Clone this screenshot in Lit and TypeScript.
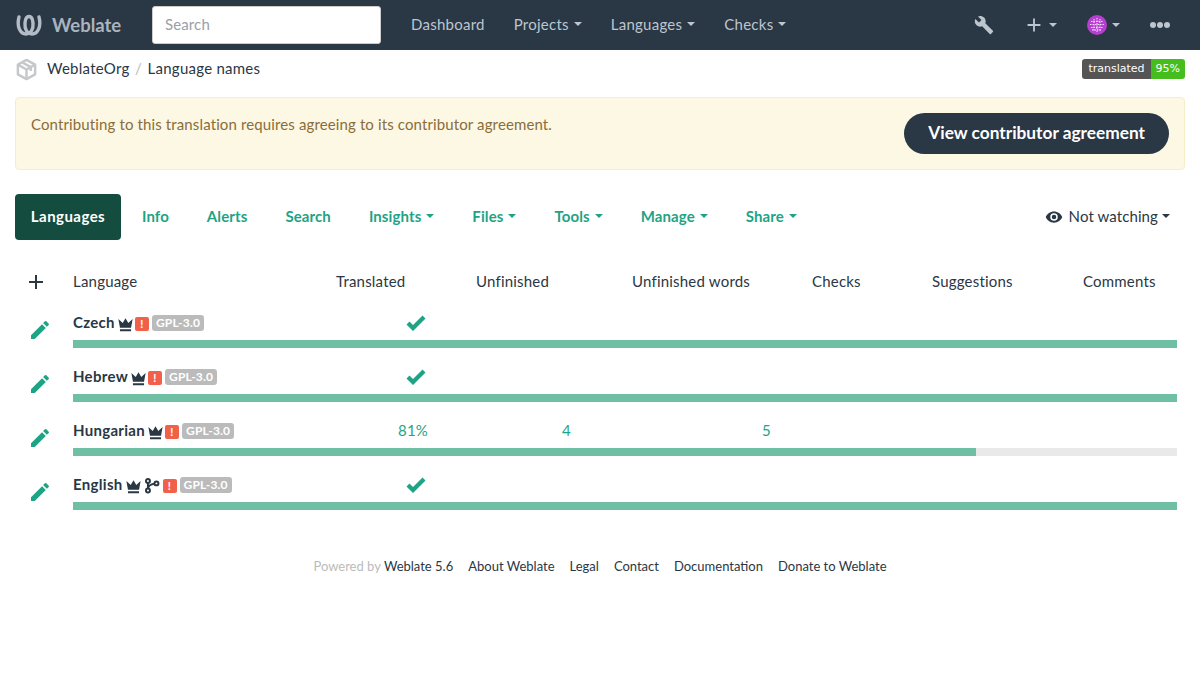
import { LitElement, html, css } from "lit";
import { customElement } from "lit/decorators.js";

const caret = html`<span class="caret"></span>`;
const crown = html`<svg class="ic crown" viewBox="0 0 24 24" width="19" height="19"><path fill="currentColor" d="M5 16 3 5l5.5 5L12 4l3.5 6L21 5l-2 11H5zM5 18h14v2.4H5z"/></svg>`;
const branch = html`<svg class="ic branch" viewBox="0 0 24 24" width="17" height="17"><g fill="none" stroke="currentColor" stroke-width="2.8"><circle cx="7" cy="5.5" r="2.8"/><circle cx="7" cy="19" r="2.8"/><circle cx="19" cy="9" r="2.8"/><path d="M7 8.3v8M16.2 9.5c-4 .6-8.6 1.5-9.2 6.5"/></g></svg>`;
const pencil = html`<svg class="pen" viewBox="0 0 24 24" width="24" height="24"><path fill="currentColor" d="M20.7 7.04a1 1 0 0 0 0-1.41l-2.34-2.34a1 1 0 0 0-1.41 0l-1.84 1.83 3.75 3.75M3 17.25V21h3.75L17.81 9.93l-3.75-3.75L3 17.25z"/></svg>`;
const check = html`<svg class="chk" viewBox="0 0 24 24" width="24" height="24"><path fill="currentColor" d="M21.5 7.5 9 20l-6.5-6.5 3-3L9 14l9.5-9.5 3 3z"/></svg>`;
const warn = html`<span class="warn">!</span>`;

type Row = { name: string; branch?: boolean; pct?: string; a?: string; b?: string; w: number };
const rows: Row[] = [
  { name: "Czech", w: 100 },
  { name: "Hebrew", w: 100 },
  { name: "Hungarian", pct: "81%", a: "4", b: "5", w: 81.8 },
  { name: "English", branch: true, w: 100 },
];

@customElement("app-root")
export class AppRoot extends LitElement {
  static styles = css`
    :host { display: block; min-height: 678px; background: #fff; color: #2a3744; font-family: "Lato", "Liberation Sans", sans-serif; font-size: 15px; line-height: 20px; letter-spacing: .125px; }
    * { box-sizing: border-box; }
    .nav { height: 50px; background: #2a3744; display: flex; align-items: center; color: #bdc6cf; }
    .brand { display: flex; align-items: center; gap: 9px; margin-left: 15px; width: 137px; font-size: 18.5px; font-weight: 700; color: #a9b4bf; letter-spacing: 0; padding-bottom: 1px; }
    .search { width: 229px; height: 38px; background: #fff; border: 1px solid #ccc; border-radius: 3px; padding: 0 12px 2px; display: flex; align-items: center; color: #9aa0a6; }
    .menu { display: flex; margin-left: 30px; gap: 29px; padding-bottom: 2px; letter-spacing: .25px; }
    .menu span { display: inline-flex; align-items: center; }
    .caret { display: inline-block; border-top: 4px solid currentColor; border-left: 4px solid transparent; border-right: 4px solid transparent; margin-left: 5px; }
    .tools { margin-left: auto; display: flex; align-items: center; margin-right: 30px; }
    .tools svg { display: block; }
    .plus { margin-left: 28.5px; display: flex; align-items: center; }
    .plus .caret { margin-left: 4.5px; }
    .avatar { margin-left: 30px; display: flex; align-items: center; }
    .dots { margin-left: 30px; display: flex; gap: 1px; }
    .dots i { width: 6px; height: 6px; border-radius: 50%; background: #bdc6cf; display: block; }
    .crumbs { height: 38px; display: flex; align-items: center; padding: 0 15px; letter-spacing: .25px; }
    .crumbs .org { margin-left: 9px; padding-bottom: 2px; }
    .crumbs .sep { color: #bbb; margin: 0 5.500px 2px 5.500px; }
    .crumbs .pg { padding-bottom: 2px; }
    .badge { margin-left: auto; display: flex; height: 20px; border-radius: 3px; overflow: hidden; font: 11px/20px "DejaVu Sans", sans-serif; letter-spacing: 0; color: #fff; }
    .badge b { font-weight: 400; background: #555; padding: 0 6px; }
    .badge u { text-decoration: none; background: #45bd1c; padding: 0 5px; }
    .alert { margin: 9px 15px 0; height: 73px; background: #fcf8e3; border: 1px solid #f5efc9; border-radius: 4px; padding: 16px 15px; display: flex; justify-content: space-between; color: #8a6d3b; }
    .cta { height: 41px; margin-top: -1px; padding: 0 24px 2px; background: #2a3744; color: #fff; font-size: 17.3px; letter-spacing: 0; font-weight: 700; border-radius: 21px; display: flex; align-items: center; }
    .tabs { margin: 24px 15px 0; display: flex; align-items: center; height: 46px; color: #1fa385; font-weight: 700; letter-spacing: .1px; }
    .tabs .t { display: inline-flex; align-items: center; margin-right: 38px; padding-bottom: 2px; }
    .tabs .active { background: #144d3f; color: #fff; border-radius: 4px; height: 46px; width: 106px; display: flex; align-items: center; justify-content: center; margin-right: 21px; padding-bottom: 2px; letter-spacing: .45px; }
    .watch { margin-left: auto; margin-right: 15px; font-weight: 400; letter-spacing: .1px; color: #2a3744; display: flex; align-items: center; padding-bottom: 2px; }
    .watch svg { margin: 2px 6px 0 0; }
    .watch .caret { margin-left: 4px; }
    .table { margin: 26px 15px 0; letter-spacing: .2px; }
    .row { display: grid; grid-template-columns: 58px 263px 140px 156px 180px 120px 151px 1fr; }
    .head { height: 32px; align-items: center; }
    .head span { white-space: nowrap; padding-bottom: 2px; }
    .plusico { margin-left: 9px; display: block; }
    .lang { height: 54px; grid-template-rows: 42px 8px; padding-right: 8px; }
    .edit { color: #1fa385; padding: 20px 0 0 13px; grid-row: 1 / 3; }
    .pen { display: block; }
    .name { font-weight: 700; display: flex; align-items: center; padding-top: 14px; height: 34px; letter-spacing: .3px; }
    .ic { display: block; flex: none; }
    .crown { margin: 4px 0 0 1px; }
    .branch { margin: 3px 3px 0 0; }
    .warn { width: 14px; height: 14px; margin-top: 4px; border-radius: 2px; background: #f1614a; color: #fff; font-size: 11px; font-weight: 700; display: flex; align-items: center; justify-content: center; }
    .lic { margin: 2px 0 0 3px; background: #bbb; color: #fff; font-size: 12px; line-height: 16px; height: 16px; border-radius: 3px; padding: 0 4px; font-weight: 700; letter-spacing: .2px; }
    .num { color: #1fa385; padding-top: 14px; }
    .c1 { padding-left: 62px; }
    .c2 { padding-left: 86px; }
    .c3 { padding-left: 130px; }
    .chkwrap { margin: -1px 0 0 6px; }
    .chk { color: #1fa385; display: block; }
    .bar { grid-column: 2 / -1; grid-row: 2; height: 8px; background: #e9e9e9; }
    .bar i { display: block; height: 100%; background: #6fbfa5; }
    .foot { margin-top: 42px; display: flex; justify-content: center; gap: 15px; font-size: 13px; letter-spacing: 0; }
    .foot .pw { color: #bbb; margin-right: -12px; }
  `;

  render() {
    return html`
      <div class="nav">
        <div class="brand">
          <svg width="28" height="24" viewBox="0 0 28 24" fill="none" stroke="#b3bcc6" stroke-width="3.4" stroke-linecap="round"><path d="M4 4C1.5 13 5 21 11 21c5 0 7.5-5 7-11-.3-4-2-6.500-4-6.500"/><path d="M24 4c2.500 9-1 17-7 17-5 0-7.500-5-7-11 .3-4 2-6.500 4-6.500"/></svg>
          Weblate
        </div>
        <div class="search">Search</div>
        <div class="menu">
          <span>Dashboard</span><span>Projects${caret}</span><span>Languages${caret}</span><span>Checks${caret}</span>
        </div>
        <div class="tools">
          <svg viewBox="0 0 24 24" width="20" height="20"><path fill="currentColor" d="m22.7 19-9.1-9.1c.9-2.300.4-5-1.500-6.900-2-2-5-2.400-7.400-1.300L9 6 6 9 1.600 4.700C.4 7.100.9 10.100 2.900 12.100c1.900 1.900 4.600 2.400 6.900 1.500l9.100 9.100c.4.4 1 .4 1.400 0l2.300-2.300c.5-.4.5-1.100.1-1.400z"/></svg>
          <div class="plus"><svg viewBox="0 0 24 24" width="22" height="22"><path fill="currentColor" d="M19 13h-6v6h-2v-6H5v-2h6V5h2v6h6v2z"/></svg>${caret}</div>
          <div class="avatar"><svg width="20" height="20" viewBox="0 0 20 20"><circle cx="10" cy="10" r="10" fill="#b63fcf"/><g fill="none" stroke="#f6dcfb" stroke-width="1" stroke-dasharray="1.500 1"><path d="M4 6.500h12M3 9.500h14M4 12.500h12M5 15h10M7 4v12M10 3v14M13 4v12"/></g></svg>${caret}</div>
          <div class="dots"><i></i><i></i><i></i></div>
        </div>
      </div>
      <div class="crumbs">
        <svg width="23" height="23" viewBox="0 0 24 24" fill="none" stroke="#c6c9cc" stroke-width="2.600" stroke-linejoin="round"><path d="M12 2 3 7v10l9 5 9-5V7l-9-5z"/><path d="M3 7l9 5 9-5M12 12v10M7.500 4.500l9 5v4"/></svg>
        <span class="org">WeblateOrg</span><span class="sep">/</span><span class="pg">Language names</span>
        <div class="badge"><b>translated</b><u>95%</u></div>
      </div>
      <div class="alert">
        <span>Contributing to this translation requires agreeing to its contributor agreement.</span>
        <div class="cta">View contributor agreement</div>
      </div>
      <div class="tabs">
        <span class="active">Languages</span>
        <span class="t">Info</span><span class="t">Alerts</span><span class="t">Search</span>
        <span class="t">Insights${caret}</span><span class="t">Files${caret}</span><span class="t">Tools${caret}</span><span class="t">Manage${caret}</span><span class="t">Share${caret}</span>
        <div class="watch">
          <svg viewBox="0 0 24 24" width="18" height="18"><path fill="currentColor" d="M12 4.500C7 4.500 2.700 7.600 1 12c1.700 4.400 6 7.500 11 7.500s9.300-3.100 11-7.500c-1.700-4.400-6-7.500-11-7.500zM12 17a5 5 0 1 1 0-10 5 5 0 0 1 0 10zm0-8a3 3 0 1 0 0 6 3 3 0 0 0 0-6z"/></svg>
          Not watching${caret}
        </div>
      </div>
      <div class="table">
        <div class="row head">
          <svg class="plusico" viewBox="0 0 24 24" width="24" height="24"><path fill="#2a3744" d="M19 13h-6v6h-2v-6H5v-2h6V5h2v6h6v2z"/></svg>
          <span>Language</span><span>Translated</span><span>Unfinished</span><span>Unfinished words</span><span>Checks</span><span>Suggestions</span><span>Comments</span>
        </div>
        ${rows.map((r) => html`
          <div class="row lang">
            <div class="edit">${pencil}</div>
            <div class="name">${r.name}${crown}${r.branch ? branch : ""}${warn}<span class="lic">GPL-3.0</span></div>
            <div class="num c1">${r.pct ?? html`<div class="chkwrap">${check}</div>`}</div>
            <div class="num c2">${r.a ?? ""}</div>
            <div class="num c3">${r.b ?? ""}</div>
            <div class="bar"><i style="width:${r.w}%"></i></div>
          </div>`)}
      </div>
      <div class="foot">
        <span class="pw">Powered by</span><span>Weblate 5.6</span><span>About Weblate</span><span>Legal</span><span>Contact</span><span>Documentation</span><span>Donate to Weblate</span>
      </div>
    `;
  }
}
